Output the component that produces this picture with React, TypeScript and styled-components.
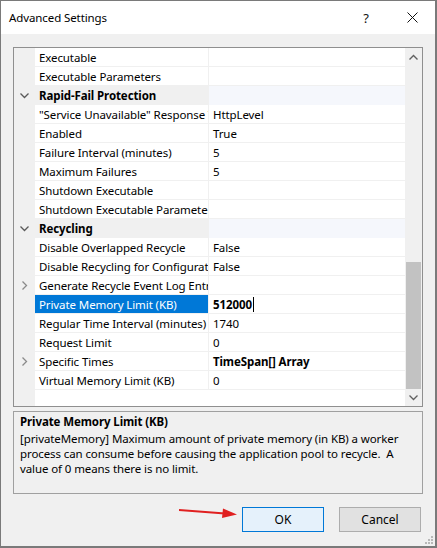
import React from 'react';
import styled, { createGlobalStyle } from 'styled-components';

const GlobalStyle = createGlobalStyle`
    html, body {
        margin: 0;
        padding: 0;
        background: #f0f0f0;
    }
    * {
        box-sizing: border-box;
    }
`;

const Window = styled.div`
    width: 437px;
    height: 548px;
    display: flex;
    flex-direction: column;
    border: 1px solid #7a7a7a;
    border-right-width: 2px;
    border-bottom-width: 2px;
    background: #f0f0f0;
    font-family: 'Noto Sans', 'Segoe UI', sans-serif;
    font-size: 11.5px;
    letter-spacing: -0.1px;
    color: #000;
    position: relative;
`;

const TitleBar = styled.div`
    height: 33px;
    display: flex;
    align-items: center;
    background: #fff;
    padding-left: 8px;
`;

const Title = styled.div`
    flex: 1;
    font-size: 11.5px;
`;

const TitleButton = styled.div<{ $w: number }>`
    width: ${(p) => p.$w}px;
    height: 33px;
    display: flex;
    align-items: center;
    justify-content: center;
    font-size: 13px;
    color: #111;
`;

const Body = styled.div`
    flex: 1;
    display: flex;
    flex-direction: column;
    padding: 13px 12px 0 12px;
`;

const Grid = styled.div`
    height: 360px;
    display: flex;
    border: 1px solid #8f8f8f;
    background: #fff;
`;

const GridInner = styled.div`
    flex: 1;
    display: flex;
    flex-direction: column;
    background: linear-gradient(to right, #f0f0f0 21px, #fff 21px);
    overflow: hidden;
`;

const Row = styled.div<{ $category?: boolean }>`
    height: 19px;
    display: flex;
    align-items: stretch;
    line-height: 17px;
    background: ${(p) => (p.$category ? '#f0f0f0' : 'transparent')};
`;

const Margin = styled.div`
    width: 21px;
    flex: none;
    display: flex;
    align-items: center;
    justify-content: center;
    color: #7a7a7a;
`;

const NameCell = styled.div<{ $selected?: boolean; $category?: boolean }>`
    width: 174px;
    flex: none;
    padding-left: 4px;
    display: flex;
    align-items: center;
    white-space: nowrap;
    overflow: hidden;
    font-weight: ${(p) => (p.$category ? 700 : 400)};
    background: ${(p) => (p.$selected ? '#0078d7' : 'transparent')};
    color: ${(p) => (p.$selected ? '#fff' : '#000')};
    border-bottom: ${(p) => (p.$category ? 'none' : '1px solid #f0f0f0')};
    border-right: ${(p) => (p.$category ? 'none' : '1px solid #f0f0f0')};
`;

const CategoryFill = styled.div`
    flex: 1;
    background: #f5f7fc;
`;

const ValueCell = styled.div<{ $bold?: boolean }>`
    flex: 1;
    padding-left: 4px;
    display: flex;
    align-items: center;
    white-space: nowrap;
    overflow: hidden;
    font-weight: ${(p) => (p.$bold ? 700 : 400)};
    border-bottom: 1px solid #f0f0f0;
`;

const Caret = styled.span`
    display: inline-block;
    width: 1px;
    height: 15px;
    background: #000;
    margin-left: 1px;
`;

const Scrollbar = styled.div`
    width: 17px;
    flex: none;
    display: flex;
    flex-direction: column;
    background: #f0f0f0;
`;

const ScrollArrow = styled.div`
    height: 17px;
    display: flex;
    align-items: center;
    justify-content: center;
`;

const ScrollTrack = styled.div`
    flex: 1;
    display: flex;
    flex-direction: column;
    justify-content: flex-end;
    padding: 0 1px;
`;

const Thumb = styled.div`
    height: 127px;
    background: #c2c2c2;
`;

const Description = styled.div`
    margin-top: 4px;
    height: 83px;
    border: 1px solid #a0a0a0;
    padding: 2px 6px;
    line-height: 15px;
`;

const DescTitle = styled.div`
    font-weight: 700;
    margin-bottom: 2px;
`;

const Footer = styled.div`
    flex: 1;
    display: flex;
    justify-content: flex-end;
    align-items: flex-start;
    gap: 15px;
    padding: 13px 2px 0 0;
    position: relative;
`;

const Button = styled.button<{ $primary?: boolean }>`
    width: 82px;
    height: 25px;
    font-family: inherit;
    font-size: 12px;
    color: #000;
    background: ${(p) => (p.$primary ? '#e5f1fb' : '#e1e1e1')};
    border: 1px solid ${(p) => (p.$primary ? '#0078d7' : '#adadad')};
    padding: 0;
`;

const Arrow = styled.svg`
    position: absolute;
    left: 166px;
    top: 13px;
`;

const Grip = styled.svg`
    position: absolute;
    right: 1px;
    bottom: 1px;
`;

type Item = {
    name: string;
    value?: string;
    category?: boolean;
    expand?: boolean;
    selected?: boolean;
    bold?: boolean;
};

const items: Item[] = [
    { name: 'Executable' },
    { name: 'Executable Parameters' },
    { name: 'Rapid-Fail Protection', category: true },
    { name: '"Service Unavailable" Response Type', value: 'HttpLevel' },
    { name: 'Enabled', value: 'True' },
    { name: 'Failure Interval (minutes)', value: '5' },
    { name: 'Maximum Failures', value: '5' },
    { name: 'Shutdown Executable' },
    { name: 'Shutdown Executable Parameters' },
    { name: 'Recycling', category: true },
    { name: 'Disable Overlapped Recycle', value: 'False' },
    { name: 'Disable Recycling for Configuration Changes', value: 'False' },
    { name: 'Generate Recycle Event Log Entry', expand: true },
    { name: 'Private Memory Limit (KB)', value: '512000', selected: true, bold: true },
    { name: 'Regular Time Interval (minutes)', value: '1740' },
    { name: 'Request Limit', value: '0' },
    { name: 'Specific Times', value: 'TimeSpan[] Array', expand: true, bold: true },
    { name: 'Virtual Memory Limit (KB)', value: '0' },
];

const ChevronDown = ({ color = '#5a5a5a' }: { color?: string }) => (
    <svg width="9" height="6" viewBox="0 0 9 6">
        <path d="M0.5 0.5 L4.5 4.5 L8.5 0.5" fill="none" stroke={color} strokeWidth="1.3" />
    </svg>
);

const ChevronUp = () => (
    <svg width="9" height="6" viewBox="0 0 9 6">
        <path d="M0.5 5.5 L4.5 1.5 L8.5 5.5" fill="none" stroke="#606060" strokeWidth="1.4" />
    </svg>
);

const ChevronRight = () => (
    <svg width="6" height="9" viewBox="0 0 6 9">
        <path d="M0.5 0.5 L4.5 4.5 L0.5 8.5" fill="none" stroke="#8a8a8a" strokeWidth="1.3" />
    </svg>
);

const App: React.FunctionComponent = () => {
    return (
        <>
            <GlobalStyle />
            <Window>
                <TitleBar>
                    <Title>Advanced Settings</Title>
                    <TitleButton $w={46}>?</TitleButton>
                    <TitleButton $w={46}>
                        <svg width="11" height="11" viewBox="0 0 11 11">
                            <path d="M0.5 0.5 L10.5 10.5 M10.5 0.5 L0.5 10.5" stroke="#111" strokeWidth="1" />
                        </svg>
                    </TitleButton>
                </TitleBar>
                <Body>
                    <Grid>
                        <GridInner>
                            {items.map((item, index) =>
                                item.category ? (
                                    <Row key={`row-${index}`} $category>
                                        <Margin>
                                            <ChevronDown />
                                        </Margin>
                                        <NameCell $category>{item.name}</NameCell>
                                        <CategoryFill />
                                    </Row>
                                ) : (
                                    <Row key={`row-${index}`}>
                                        <Margin>{item.expand && <ChevronRight />}</Margin>
                                        <NameCell $selected={item.selected}>{item.name}</NameCell>
                                        <ValueCell $bold={item.bold}>
                                            {item.value}
                                            {item.selected && <Caret />}
                                        </ValueCell>
                                    </Row>
                                )
                            )}
                        </GridInner>
                        <Scrollbar>
                            <ScrollArrow>
                                <ChevronUp />
                            </ScrollArrow>
                            <ScrollTrack>
                                <Thumb />
                            </ScrollTrack>
                            <ScrollArrow>
                                <ChevronDown color="#606060" />
                            </ScrollArrow>
                        </Scrollbar>
                    </Grid>
                    <Description>
                        <DescTitle>Private Memory Limit (KB)</DescTitle>
                        <div>
                            [privateMemory] Maximum amount of private memory (in KB) a worker process can consume
                            before causing the application pool to recycle.&nbsp; A value of 0 means there is no
                            limit.
                        </div>
                    </Description>
                    <Footer>
                        <Arrow width="60" height="12" viewBox="0 0 60 12">
                            <path d="M0 3 L46 6.5" stroke="#e02020" strokeWidth="2.2" />
                            <path d="M44 1.5 L58 7.5 L43 11 Z" fill="#e02020" />
                        </Arrow>
                        <Button $primary>OK</Button>
                        <Button>Cancel</Button>
                    </Footer>
                </Body>
                <Grip width="10" height="10" viewBox="0 0 10 10">
                    <rect x="7" y="1" width="2" height="2" fill="#b8b8b8" />
                    <rect x="4" y="4" width="2" height="2" fill="#b8b8b8" />
                    <rect x="7" y="4" width="2" height="2" fill="#b8b8b8" />
                    <rect x="1" y="7" width="2" height="2" fill="#b8b8b8" />
                    <rect x="4" y="7" width="2" height="2" fill="#b8b8b8" />
                    <rect x="7" y="7" width="2" height="2" fill="#b8b8b8" />
                </Grip>
            </Window>
        </>
    );
};

export default App;
